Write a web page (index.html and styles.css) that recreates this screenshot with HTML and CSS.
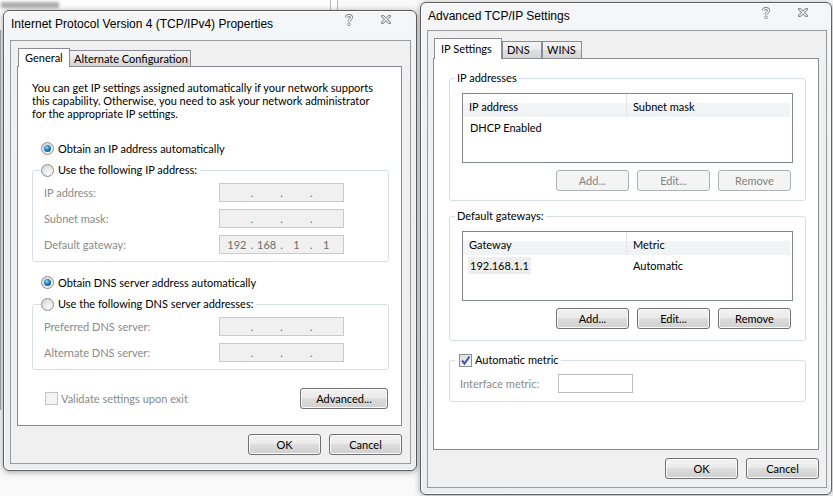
FILE: index.html
```html
<!DOCTYPE html>
<html>
<head>
    <meta charset="UTF-8">
    <title>TCP/IPv4 Properties</title>
    <link rel="stylesheet" href="styles.css">
</head>
<body>
<div class="desk">
    <div class="bgwin">
        <span class="bgblur"></span>
    </div>
    <div class="bgline"></div>
    <div class="bgedge"></div>

    <!-- left dialog -->
    <div class="win win-ipv4">
        <div class="caption">
            <span class="caption-text">Internet Protocol Version 4 (TCP/IPv4) Properties</span>
            <span class="caption-btns">
                <svg class="ico-help" width="8" height="12" viewBox="0 0 8 12">
                    <path d="M1.5 3.5 C1.5 0.8 6.5 0.8 6.5 3.5 C6.5 5.5 4 5.5 4 7.8" fill="none" stroke="#8a8a8a" stroke-width="3"/>
                    <path d="M1.5 3.5 C1.5 0.8 6.5 0.8 6.5 3.5 C6.5 5.5 4 5.5 4 7.8" fill="none" stroke="#fff" stroke-width="1.2"/>
                    <circle cx="4" cy="10.3" r="1.4" fill="#fff" stroke="#8a8a8a" stroke-width="0.9"/>
                </svg>
                <svg class="ico-close" width="10" height="9" viewBox="0 0 10 9">
                    <path d="M1.5 1.2 L8.5 7.8 M8.5 1.2 L1.5 7.8" stroke="#8a8a8a" stroke-width="3" stroke-linecap="square"/>
                    <path d="M1.5 1.2 L8.5 7.8 M8.5 1.2 L1.5 7.8" stroke="#fff" stroke-width="1.1"/>
                </svg>
            </span>
        </div>
        <div class="client">
            <div class="tabs">
                <span class="tab active t-general">General</span>
                <span class="tab t-alt">Alternate Configuration</span>
            </div>
            <div class="panel">
                <p class="intro">You can get IP settings assigned automatically if your network supports<br>this capability. Otherwise, you need to ask your network administrator<br>for the appropriate IP settings.</p>

                <div class="opt opt-first"><span class="radio on"></span>Obtain an IP address automatically</div>
                <fieldset class="group ip-group">
                    <legend><span class="legend-in"><span class="radio"></span>Use the following IP address:</span></legend>
                    <div class="rows">
                        <div class="field"><span class="lbl">IP address:</span><span class="ipbox"><b></b><i>.</i><b></b><i>.</i><b></b><i>.</i><b></b></span></div>
                        <div class="field"><span class="lbl">Subnet mask:</span><span class="ipbox"><b></b><i>.</i><b></b><i>.</i><b></b><i>.</i><b></b></span></div>
                        <div class="field"><span class="lbl">Default gateway:</span><span class="ipbox"><b>192</b><i>.</i><b>168</b><i>.</i><b>1</b><i>.</i><b>1</b></span></div>
                    </div>
                </fieldset>

                <div class="opt opt-dns"><span class="radio on"></span>Obtain DNS server address automatically</div>
                <fieldset class="group ip-group">
                    <legend><span class="legend-in"><span class="radio"></span>Use the following DNS server addresses:</span></legend>
                    <div class="rows">
                        <div class="field"><span class="lbl">Preferred DNS server:</span><span class="ipbox"><b></b><i>.</i><b></b><i>.</i><b></b><i>.</i><b></b></span></div>
                        <div class="field"><span class="lbl">Alternate DNS server:</span><span class="ipbox"><b></b><i>.</i><b></b><i>.</i><b></b><i>.</i><b></b></span></div>
                    </div>
                </fieldset>

                <div class="panel-foot">
                    <div class="chk-row dim"><span class="check off"></span>Validate settings upon exit</div>
                    <button class="btn btn-wide">Advanced...</button>
                </div>
            </div>
            <div class="dlg-btns">
                <button class="btn">OK</button>
                <button class="btn">Cancel</button>
            </div>
        </div>
    </div>

    <!-- right dialog -->
    <div class="win win-adv">
        <div class="caption">
            <span class="caption-text">Advanced TCP/IP Settings</span>
            <span class="caption-btns">
                <svg class="ico-help" width="8" height="12" viewBox="0 0 8 12">
                    <path d="M1.5 3.5 C1.5 0.8 6.5 0.8 6.5 3.5 C6.5 5.5 4 5.5 4 7.8" fill="none" stroke="#8a8a8a" stroke-width="3"/>
                    <path d="M1.5 3.5 C1.5 0.8 6.5 0.8 6.5 3.5 C6.5 5.5 4 5.5 4 7.8" fill="none" stroke="#fff" stroke-width="1.2"/>
                    <circle cx="4" cy="10.3" r="1.4" fill="#fff" stroke="#8a8a8a" stroke-width="0.9"/>
                </svg>
                <svg class="ico-close" width="10" height="9" viewBox="0 0 10 9">
                    <path d="M1.5 1.2 L8.5 7.8 M8.5 1.2 L1.5 7.8" stroke="#8a8a8a" stroke-width="3" stroke-linecap="square"/>
                    <path d="M1.5 1.2 L8.5 7.8 M8.5 1.2 L1.5 7.8" stroke="#fff" stroke-width="1.1"/>
                </svg>
            </span>
        </div>
        <div class="client">
            <div class="tabs">
                <span class="tab active t-ip">IP Settings</span>
                <span class="tab">DNS</span>
                <span class="tab">WINS</span>
            </div>
            <div class="panel">
                <fieldset class="group adv-group">
                    <legend>IP addresses</legend>
                    <div class="gbody">
                        <div class="list">
                            <div class="list-head"><span class="col c1">IP address</span><span class="col">Subnet mask</span></div>
                            <div class="list-row"><span class="cell c1">DHCP Enabled</span><span class="cell"></span></div>
                        </div>
                        <div class="list-btns">
                            <button class="btn off">Add...</button>
                            <button class="btn off">Edit...</button>
                            <button class="btn off">Remove</button>
                        </div>
                    </div>
                </fieldset>

                <fieldset class="group adv-group gw-group">
                    <legend>Default gateways:</legend>
                    <div class="gbody">
                        <div class="list">
                            <div class="list-head"><span class="col c1">Gateway</span><span class="col">Metric</span></div>
                            <div class="list-row"><span class="cell c1 sel-cell"><span class="sel">192.168.1.1</span></span><span class="cell">Automatic</span></div>
                        </div>
                        <div class="list-btns">
                            <button class="btn">Add...</button>
                            <button class="btn">Edit...</button>
                            <button class="btn">Remove</button>
                        </div>
                    </div>
                </fieldset>

                <fieldset class="group adv-group metric-group">
                    <legend><span class="legend-in"><span class="check on">
                        <svg width="11" height="11" viewBox="0 0 11 11"><path d="M2 5.5 L4.5 8.5 L9.5 1.5" fill="none" stroke="#3d5aa8" stroke-width="2"/></svg>
                    </span>Automatic metric</span></legend>
                    <div class="gbody metric-body">
                        <div class="field"><span class="lbl lbl-metric">Interface metric:</span><span class="textbox"></span></div>
                    </div>
                </fieldset>
            </div>
            <div class="dlg-btns">
                <button class="btn">OK</button>
                <button class="btn">Cancel</button>
            </div>
        </div>
    </div>
</div>
</body>
</html>
```

FILE: styles.css
```css
* {
    margin: 0;
    padding: 0;
    box-sizing: border-box;
    font-family: Lato, "Liberation Sans", sans-serif;
    font-size: 11px;
    color: #000;
}

body {
    width: 833px;
    height: 496px;
    overflow: hidden;
    background: #f9f9f9;
}

.desk {
    position: relative;
    width: 833px;
    height: 496px;
}

/* whatever lies behind the dialogs */
.bgwin {
    position: absolute;
    left: -6px;
    top: -8px;
    width: 344px;
    height: 40px;
    border: 1px solid #a0a0a0;
    background: #fdfdfd;
}

.bgblur {
    position: absolute;
    left: 6px;
    top: 9px;
    width: 58px;
    height: 6px;
    background: #8c8c8c;
    filter: blur(1.5px);
    opacity: .7;
}

.bgline {
    position: absolute;
    left: 330px;
    top: 0;
    width: 8px;
    height: 12px;
    border-left: 1px solid #b8b8b8;
    border-right: 1px solid #b8b8b8;
}

.bgedge {
    position: absolute;
    left: 0;
    top: 30px;
    width: 3px;
    height: 380px;
    border-left: 1px solid #a8a8a8;
    background: #ececec;
}

/*--window frame--*/
.win {
    position: absolute;
    display: flex;
    flex-direction: column;
    border: 1px solid #5e5e5e;
    border-radius: 6px;
    background: linear-gradient(#f4f6f8, #eef0f2 30%, #ebedef);
    box-shadow: inset 0 0 0 1px #fbfcfd, 0 1px 6px rgba(0, 0, 0, .35);
}

.win-ipv4 {
    left: 3px;
    top: 10px;
    width: 414px;
    height: 461px;
    padding: 0 5px 6px 6px;
}

.win-adv {
    left: 420px;
    top: 2px;
    width: 412px;
    height: 493px;
    padding: 0 4px 6px 6px;
}

.caption {
    display: flex;
    align-items: flex-start;
    height: 29px;
}

.win-adv .caption {
    height: 27px;
}

.caption-text {
    margin: 5px 0 0 1px;
    font-family: "Liberation Sans", sans-serif;
    font-size: 12px;
    line-height: 16px;
}

.caption-btns {
    display: flex;
    align-items: flex-start;
    gap: 28px;
    margin: 3px 20px 0 auto;
}

.win-adv .caption-btns {
    margin-right: 19px;
    margin-top: 4px;
}

.ico-close {
    margin-top: 1px;
}

/*--client area--*/
.client {
    flex: 1;
    display: flex;
    flex-direction: column;
    border: 1px solid #9a9a9a;
    background: #f0f0f0;
}

.win-ipv4 .client {
    padding: 7px 8px 8px 6px;
}

.win-adv .client {
    padding: 7px 7px 8px 5px;
}

/*--tabs--*/
.tabs {
    display: flex;
    align-items: flex-end;
    height: 18px;
    padding-left: 1px;
}

.win-adv .tabs {
    height: 20px;
}

.tab {
    height: 16px;
    padding: 0 4px;
    line-height: 15px;
    white-space: nowrap;
    border: 1px solid #898c95;
    border-bottom: 0;
    background: linear-gradient(#f4f4f4, #ebebeb 50%, #dedede 51%, #d6d6d6);
}

.tab + .tab {
    margin-left: -1px;
}

.tab.active {
    position: relative;
    z-index: 1;
    height: 19px;
    margin-bottom: -1px;
    padding: 0 0 0 6px;
    line-height: 17px;
    background: #fff;
}

.t-general {
    width: 52px;
}

.t-alt {
    width: 122px;
}

.win-adv .tab {
    width: 40px;
    height: 17px;
    line-height: 16px;
}

.win-adv .tab + .tab {
    margin-left: 0;
}

.win-adv .tab.active {
    width: 68px;
    height: 21px;
    line-height: 19px;
}

.panel {
    flex: 1;
    background: #fff;
    border: 1px solid #898c95;
}

.win-ipv4 .panel {
    padding: 14px 12px 0 14px;
}

.win-adv .panel {
    padding: 11px 12px 0 15px;
}

.intro {
    line-height: 13px;
    white-space: nowrap;
}

/*--radio / check--*/
.opt {
    display: flex;
    align-items: center;
    height: 16px;
    padding-left: 9px;
}

.opt-first {
    margin-top: 20px;
}

.opt-dns {
    margin-top: 12px;
}

.radio {
    position: relative;
    display: inline-block;
    flex: none;
    width: 13px;
    height: 13px;
    margin-right: 4px;
    border: 1px solid #8f8f8f;
    border-radius: 50%;
    background: radial-gradient(circle at 65% 70%, #fafafa 0, #e8e8e8 45%, #cfcfcf 100%);
}

.radio.on::after {
    content: "";
    position: absolute;
    left: 2px;
    top: 2px;
    width: 7px;
    height: 7px;
    border-radius: 50%;
    background: radial-gradient(circle at 40% 35%, #9fe0ff 0, #2f8fd0 35%, #0f4e82 80%);
}

.check {
    display: inline-flex;
    align-items: center;
    justify-content: center;
    flex: none;
    width: 13px;
    height: 13px;
    margin-right: 3px;
    border: 1px solid #8f8f8f;
    background: linear-gradient(135deg, #dcdcdc, #f8f8f8);
}

.check.off {
    border-color: #c4c4c4;
    background: #f4f4f4;
}

/*--group boxes--*/
.group {
    border: 1px solid #d5dfe5;
    border-radius: 3px;
}

.group legend {
    padding: 0 2px;
    line-height: 16px;
}

.legend-in {
    display: flex;
    align-items: center;
    height: 16px;
}

.ip-group {
    margin-top: 6px;
    padding: 0 11px 7px 8px;
}

.ip-group legend {
    padding: 0 3px 0 0;
}

.rows {
    display: flex;
    flex-direction: column;
    gap: 7px;
    padding: 5px 0 0 3px;
}

.field {
    display: flex;
    align-items: center;
    height: 19px;
}

.lbl {
    width: 175px;
    color: #8a8a8a;
}

.ipbox {
    display: flex;
    align-items: center;
    width: 125px;
    height: 19px;
    padding: 0 4px;
    border: 1px solid #cacaca;
    background: #f0f0f0;
}

.ipbox b,
.ipbox i {
    font-weight: normal;
    font-style: normal;
    color: #6d6d6d;
    text-align: center;
}

.ipbox b {
    flex: 1;
}

.ipbox i {
    width: 4px;
}

.panel-foot {
    display: flex;
    align-items: center;
    justify-content: space-between;
    margin-top: 18px;
    padding: 0 1px 0 13px;
}

.chk-row {
    display: flex;
    align-items: center;
    color: #8a8a8a;
}

/*--buttons--*/
.btn {
    flex: none;
    width: 73px;
    height: 21px;
    border: 1px solid #707070;
    border-radius: 3px;
    background: linear-gradient(#f2f2f2, #ebebeb 45%, #dddddd 50%, #cfcfcf);
    box-shadow: inset 0 0 0 1px #fbfbfb;
    text-align: center;
    line-height: 19px;
}

.btn.off {
    border-color: #adb2b5;
    background: #f4f4f4;
    box-shadow: none;
    color: #838383;
}

.btn-wide {
    width: 88px;
}

.dlg-btns {
    display: flex;
    justify-content: flex-end;
    gap: 8px;
    margin-top: 8px;
}

/*--advanced page--*/
.adv-group {
    padding: 0 12px 9px 5px;
}

.gbody {
    padding-left: 7px;
}

.gw-group {
    margin-top: 7px;
    padding-bottom: 11px;
}

.metric-group {
    margin-top: 11px;
    padding-bottom: 8px;
}

.metric-group legend {
    padding: 0 2px 0 4px;
}

.metric-body {
    padding: 6px 0 0 5px;
}

.lbl-metric {
    width: 98px;
}

.textbox {
    width: 75px;
    height: 19px;
    border: 1px solid #bdbdbd;
    background: #fff;
}

.list {
    height: 70px;
    margin-top: 7px;
    border: 1px solid #828790;
    background: #fff;
}

.list-head {
    display: flex;
    height: 23px;
    margin-right: 2px;
    background: linear-gradient(#fff, #fff 40%, #f3f4f6 41%, #f1f2f4);
}

.col {
    padding: 2px 0 0 6px;
    line-height: 21px;
}

.c1 {
    width: 164px;
    border-right: 1px solid #e3e5e8;
}

.list-row {
    display: flex;
    height: 17px;
    margin-top: 2px;
    line-height: 17px;
}

.cell {
    padding-left: 6px;
}

.list-row .c1 {
    padding-left: 7px;
    border-right: 0;
}

.list-row .sel-cell {
    padding-left: 5px;
}

.sel {
    display: inline-block;
    height: 17px;
    padding: 0 2px;
    background: #eeeeee;
}

.list-btns {
    display: flex;
    justify-content: flex-end;
    gap: 8px;
    margin-top: 7px;
    padding-right: 2px;
}
```
